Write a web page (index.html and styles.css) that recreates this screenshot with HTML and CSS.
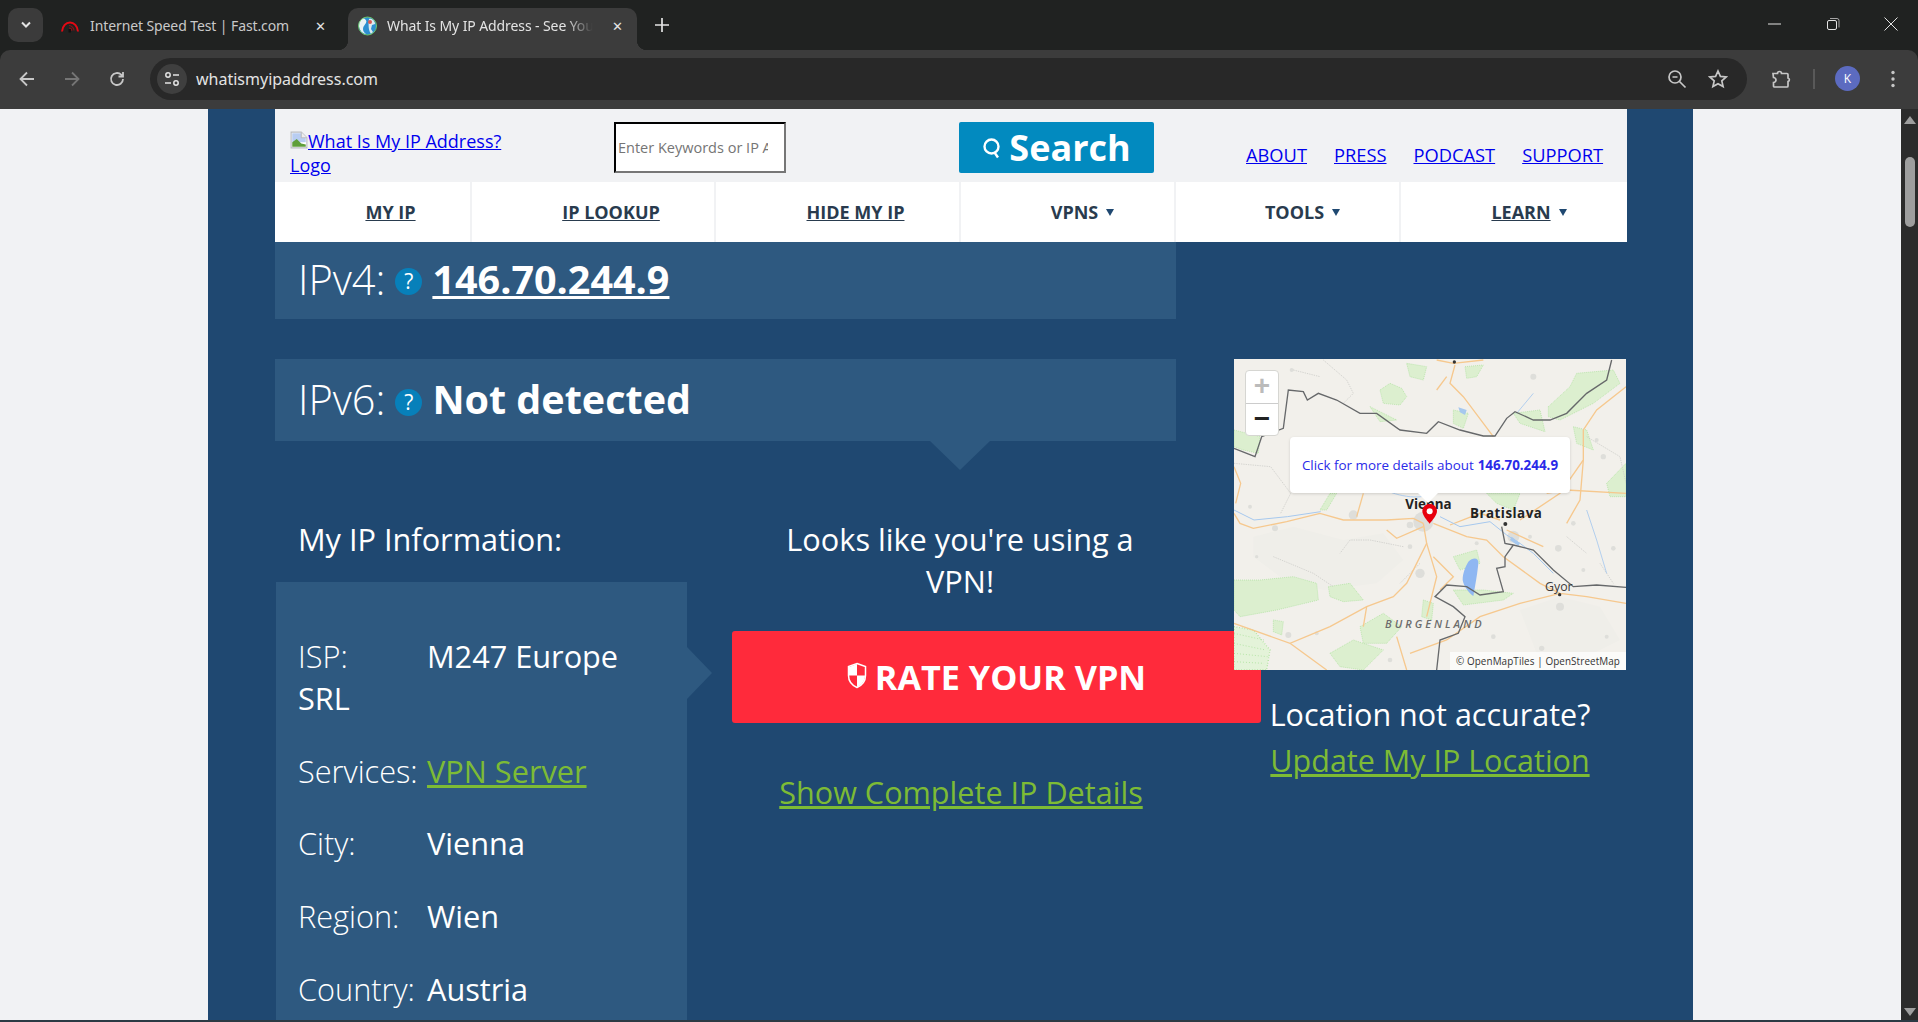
FILE: index.html
```html
<!DOCTYPE html>
<html lang="en">
<head>
<meta charset="UTF-8" />
<title>What Is My IP Address</title>
<link rel="stylesheet" href="styles.css">
</head>
<body>
<div class="chrome-tabs">
  <div class="tab-search">
    <svg width="12" height="8" viewBox="0 0 12 8"><path d="M2 1.500l4 4 4-4" fill="none" stroke="#e3e3e3" stroke-width="2"/></svg>
  </div>
  <div class="tab first">
    <svg class="favicon" width="20" height="16" viewBox="0 0 20 16"><path d="M2 13.500C2.500 8 6 4.500 10 4.500s7.500 3.500 8 9" fill="none" stroke="#e50914" stroke-width="2"/><path d="M9 7.500c2.500 0 5 2.500 5 5M9 10c1.500 0 2.800 1.300 2.800 2.800" fill="none" stroke="#8e1015" stroke-width="1.200"/><rect x="8.500" y="11" width="2.500" height="3.500" fill="#111"/></svg>
    <span class="tab-title">Internet Speed Test | Fast.com</span>
    <span class="tab-close">✕</span>
  </div>
  <div class="tab active">
    <svg class="favicon" width="19" height="20" viewBox="0 0 19 20"><circle cx="9.500" cy="10" r="9" fill="#2c8fd0"/><path d="M5 2c3 1 4 3 3 5s-3 3-3 6 2 4 3 5c-3 0-6-3-7-7s1-7 4-9z" fill="#e8f2f6"/><path d="M11 3c3-1 6 2 6 5l-3 1-1 4 2 3-2 2c-2-3-3-7-2-15z" fill="#dbeaf0"/><circle cx="12" cy="6" r="2" fill="#d65a55"/><circle cx="9.500" cy="10" r="9" fill="none" stroke="#6cc56f" stroke-width="1"/></svg>
    <span class="tab-title">What Is My IP Address - See Your Public</span>
    <span class="tab-close">✕</span>
  </div>
  <div class="new-tab">
    <svg width="14" height="14" viewBox="0 0 14 14"><path d="M7 0v14M0 7h14" stroke="#e3e3e3" stroke-width="1.700"/></svg>
  </div>
  <div class="window-btns">
    <svg width="14" height="14" viewBox="0 0 14 14"><path d="M0 7h13" stroke="#e3e3e3" stroke-width="1"/></svg>
    <svg width="14" height="14" viewBox="0 0 14 14"><rect x="1.500" y="3.500" width="9" height="9" rx="1.500" fill="none" stroke="#e3e3e3"/><path d="M4 1.500h7a2 2 0 0 1 2 2v7" fill="none" stroke="#a5a5a5"/></svg>
    <svg width="14" height="14" viewBox="0 0 14 14"><path d="M.5.5l13 13M13.500.5l-13 13" stroke="#e3e3e3" stroke-width="1"/></svg>
  </div>
</div>

<div class="toolbar">
  <svg class="nav-icon" width="18" height="18" viewBox="0 0 18 18"><path d="M16 9H3M9 2.500L2.500 9 9 15.500" fill="none" stroke="#c7c7c7" stroke-width="1.800"/></svg>
  <svg class="nav-icon" width="18" height="18" viewBox="0 0 18 18"><path d="M2 9h13M9 2.500L15.500 9 9 15.500" fill="none" stroke="#757575" stroke-width="1.800"/></svg>
  <svg class="nav-icon" width="18" height="18" viewBox="0 0 18 18"><path d="M15 9a6 6 0 1 1-1.800-4.300L15 6.500M15 2v4.500h-4.500" fill="none" stroke="#c7c7c7" stroke-width="1.800"/></svg>
  <div class="omnibox">
    <span class="site-settings">
      <svg width="16" height="16" viewBox="0 0 16 16"><g fill="none" stroke="#e3e3e3" stroke-width="1.500"><circle cx="4" cy="4" r="2.200"/><path d="M9 4h6M1 12h6"/><circle cx="12" cy="12" r="2.200"/></g></svg>
    </span>
    <span class="url">whatismyipaddress.com</span>
    <svg class="omni-icon" width="20" height="20" viewBox="0 0 20 20"><g fill="none" stroke="#c7c7c7" stroke-width="1.700"><circle cx="8" cy="8" r="6"/><path d="M5.500 8h5M12.500 12.500L18.500 18.500"/></g></svg>
    <svg class="omni-icon" width="20" height="20" viewBox="0 0 20 20"><path d="M10 2l2.400 5.400 5.800.6-4.400 3.900 1.300 5.700L10 14.700l-5.100 2.900 1.300-5.700L1.800 8l5.800-.6z" fill="none" stroke="#c7c7c7" stroke-width="1.700"/></svg>
  </div>
  <svg class="ext-icon" width="20" height="20" viewBox="0 0 20 20"><path d="M2 4.500h4.500a2 2 0 0 1 4 0H16a1 1 0 0 1 1 1v3.500a1.800 1.800 0 0 1 0 3.500V17a1 1 0 0 1-1 1H3.500a1 1 0 0 1-1-1v-3.500a2.500 2.500 0 0 0 0-5z" fill="none" stroke="#c7c7c7" stroke-width="1.700"/></svg>
  <span class="toolbar-sep"></span>
  <span class="avatar">K</span>
  <svg class="menu-dots" width="6" height="18" viewBox="0 0 6 18"><circle cx="3" cy="2.500" r="1.700" fill="#c7c7c7"/><circle cx="3" cy="9" r="1.700" fill="#c7c7c7"/><circle cx="3" cy="15.500" r="1.700" fill="#c7c7c7"/></svg>
</div>

<div class="viewport">
  <div class="page">
    <div class="wrap">
      <header class="site-head">
        <a class="logo" href="#"><svg class="broken-img" width="18" height="18" viewBox="0 0 16 16"><path d="M1 1h9l5 5v9H1z" fill="#fff" stroke="#b9bcc1"/><path d="M2 2h8v4h4v4H2z" fill="#b8cdf2"/><path d="M2 14V10l4-3 4 4 4 1v2z" fill="#5f9e3a"/><path d="M10 1v5h5" fill="#eee" stroke="#b9bcc1"/></svg>What Is My IP Address? Logo</a>
        <input class="search-input" type="text" placeholder="Enter Keywords or IP Address">
        <button class="search-btn"><svg width="20" height="24" viewBox="0 0 20 24"><circle cx="9.500" cy="10.500" r="7" fill="none" stroke="#fff" stroke-width="2.400"/><path d="M12.500 16.500l3.500 5" stroke="#fff" stroke-width="2.400"/></svg>Search</button>
        <nav class="head-links">
          <a href="#">ABOUT</a>
          <a href="#">PRESS</a>
          <a href="#">PODCAST</a>
          <a href="#">SUPPORT</a>
        </nav>
      </header>
      <nav class="main-nav">
        <div class="nav-item w1"><a href="#">MY IP</a></div>
        <div class="nav-item w2"><a href="#">IP LOOKUP</a></div>
        <div class="nav-item w3"><a href="#">HIDE MY IP</a></div>
        <div class="nav-item w4"><a class="plain" href="#">VPNS</a><span class="caret"></span></div>
        <div class="nav-item w5"><a class="plain" href="#">TOOLS</a><span class="caret"></span></div>
        <div class="nav-item w6"><a href="#">LEARN</a><span class="caret"></span></div>
      </nav>
      <div class="content">
        <div class="left">
          <div class="ip-box v4">
            <span class="ip-label">IPv4:</span><span class="help">?</span><a class="ip-value" href="#">146.70.244.9</a>
          </div>
          <div class="ip-box v6">
            <span class="ip-label">IPv6:</span><span class="help">?</span><span class="ip-value none">Not detected</span>
          </div>
          <div class="info-row">
            <div class="info-col">
              <h2 class="info-title">My IP Information:</h2>
              <div class="info-box">
                <div class="info-line"><span class="info-key">ISP:</span>M247 Europe SRL</div>
                <div class="info-line"><span class="info-key">Services:</span><a class="green" href="#">VPN Server</a></div>
                <div class="info-line"><span class="info-key">City:</span>Vienna</div>
                <div class="info-line"><span class="info-key">Region:</span>Wien</div>
                <div class="info-line"><span class="info-key">Country:</span>Austria</div>
              </div>
            </div>
            <div class="vpn-col">
              <p class="vpn-msg">Looks like you're using a VPN!</p>
              <a class="rate-btn" href="#">
                <svg width="20" height="28" viewBox="0 0 20 28"><path d="M10 1.500l8.500 3v9c0 6-4 10-8.500 12-4.500-2-8.500-6-8.500-12v-9z" fill="none" stroke="#fff" stroke-width="1.500"/><path d="M10 2v11.500H2V5zM10 13.500h8c0 5.500-3.500 9.500-8 11.500z" fill="#fff"/></svg>
                RATE YOUR VPN
              </a>
              <a class="green details" href="#">Show Complete IP Details</a>
            </div>
          </div>
        </div>
        <div class="right">
          <div class="map">
            <svg class="map-art" width="392" height="311" viewBox="42 27 1176 933">
              <rect x="42" y="27" width="1176" height="933" fill="#f2f0eb"/>
              <g class="map-base">
                <path d="M100 560l120-30 150 40 120-20 60 80-80 70-160 20-130-40-80-60zM900 780l120-40 120 30 60 100-120 60-130-20z" fill="#efeee9"/>
                <g fill="#dededa">
                  <circle cx="610" cy="515" r="30"/><circle cx="570" cy="525" r="10"/><circle cx="880" cy="560" r="18"/><circle cx="400" cy="495" r="14"/><circle cx="940" cy="80" r="9"/><circle cx="1020" cy="770" r="12"/><circle cx="600" cy="670" r="14"/><circle cx="165" cy="535" r="9"/><circle cx="1015" cy="595" r="10"/><circle cx="1180" cy="595" r="7"/><circle cx="1150" cy="320" r="8"/><circle cx="205" cy="855" r="9"/><circle cx="820" cy="860" r="7"/><circle cx="965" cy="895" r="8"/><circle cx="570" cy="590" r="7"/><circle cx="770" cy="580" r="6"/><circle cx="1090" cy="660" r="6"/><circle cx="90" cy="470" r="6"/><circle cx="215" cy="60" r="6"/><circle cx="930" cy="560" r="6"/><circle cx="1130" cy="270" r="6"/><circle cx="1060" cy="520" r="7"/><circle cx="510" cy="930" r="7"/><circle cx="290" cy="850" r="6"/><circle cx="110" cy="620" r="5"/><circle cx="1160" cy="860" r="6"/>
                </g>
                <g fill="#dcefcf" stroke="#a9e09a" stroke-width="2" stroke-dasharray="3 3">
                  <path d="M480 120l30-20 35 15 15 25-20 25-50-5z"/>
                  <path d="M560 40l60 10-10 40-40-10z"/>
                  <path d="M735 50l55-5-20 35-30 5z"/>
                  <path d="M985 170l65-60 20-40 110-10 20 40-80 60-100 50-35-10z"/>
                  <path d="M880 190l80-10 15 65-75-25z"/>
                  <path d="M450 170l80 40-50 5z"/>
                  <path d="M42 240l78 20-5 50-45-10-28-10z"/>
                  <path d="M42 690l78 0 100-10 70 20 5 50-125 30-110 20-18-20z"/>
                  <path d="M325 710l65-10 40 50-60 5-40-15z"/>
                  <path d="M420 830l70-40 55 40-45 50h-70z"/>
                  <path d="M330 910l70-40 90 30-60 60-70-10z"/>
                  <path d="M700 620l70-20 10 40-60 20z"/>
                  <path d="M700 720l90 0 90 10-30 20-120 15z"/>
                  <path d="M800 430h100l-20 50-50-20z"/>
                  <path d="M1160 400l58-60v100h-48z"/>
                  <path d="M1060 230l40 10 20 60-50-20z"/>
                  <path d="M330 430h20l-30 50h-20z"/>
                  <path d="M700 180l45 10-15 45-30-15z"/>
                  <path d="M610 750l30 10-5 50-30-10z"/>
                  <path d="M160 810l30 5-5 40-25-10z"/>
                </g>
                <path d="M42 830l58 10 50 60-10 60H42z" fill="#e4f3d9" stroke="#a0e08f" stroke-width="4" stroke-dasharray="2 6"/>
                <path d="M42 850l90 20M42 880l95 20M42 910l100 10M42 935l90 5" stroke="#a0e08f" stroke-width="3" stroke-dasharray="2 7" fill="none"/>
                <g fill="none" stroke="#c6c6c3" stroke-width="2" stroke-dasharray="4 3">
                  <path d="M310 30l70 60 20 40-30 30M42 340l110 10 60 80-30 60M1100 260l100 60 18 80M700 290l40 100M550 590l-100-20-60 0-30 40M220 60l80 20M600 640l-60 60M160 620l120 50 60 40M1140 640l40 60M1040 560l60 50"/>
                </g>
                <g fill="none" stroke="#f6c88e" stroke-width="4">
                  <path d="M42 490l18 30 40 15 100-20 100-25 70 20h130l80-5 30 15"/>
                  <path d="M610 520l10 60-30 60-30 60-40 40-80 30-110 60-120 50-168-60"/>
                  <path d="M640 520l100 40 60 10 50 50 110 80 60 30 80 10 118 20"/>
                  <path d="M705 45l-15 55 40 40 90 120"/>
                  <path d="M650 30l50 10 90-10"/>
                  <path d="M430 430l-20 70"/>
                  <path d="M500 540l30 25 80-35"/>
                  <path d="M620 580l30 100-10 40-20 80"/>
                  <path d="M1218 110l-88 70-40 60v90l-70 100-120 80"/>
                  <path d="M690 525l90-35 60 20"/>
                  <path d="M860 540l110 50"/>
                  <path d="M980 430l60-10 178 10"/>
                  <path d="M1020 730l-120 30-120 40-100 70-110 40"/>
                  <path d="M210 880l110 80"/>
                  <path d="M440 770l-10 60M530 860l30 100"/>
                  <path d="M1090 330l-10 120-40 70"/>
                  <path d="M42 350l20 50-15 60M680 80l-30 40M640 620l60 60-40 40"/>
                </g>
                <path d="M660 500l60 30 90-15 50 40 40 25 40 30 60 60M42 480l60 30 100-10 100-15" fill="none" stroke="#a6c8ee" stroke-width="3"/>
                <path d="M515 428c30 10 60 15 90 12M1100 480l30 90 30 100M940 130l-50 60" fill="none" stroke="#a6c8ee" stroke-width="2.500"/>
                <path d="M745 635c15-15 32-12 30 5 -2 25-8 60-15 98-10-6-30-30-32-48 0-20 8-40 17-55z" fill="#8fb7f2"/>
                <path d="M715 172l25 8-5 15-15-8zM875 560l25 20-5 8-25-18z" fill="#a6c8ee"/>
                <g fill="none" stroke="#66686a" stroke-width="4">
                  <path d="M42 295l63 25 20-60 65-25 15-115 45 5 12 25 33-20 55 20 70 40h50l70 50 80 10 35-35 65 25 70 18h35l35-53 25-20 55 25h50l50-20 60-60 60-40 15-60"/>
                  <path d="M845 530l10 50 25 5 60 15 60 60 60 50 70-5 88 7"/>
                  <path d="M880 585l-25 35v30l-25 5 20 70-70 10-40-25-60-5-35 35 55 30 35 30-20 50-55 20-10 90"/>
                </g>
              </g>
              <g class="map-labels">
                <text x="556" y="476" font-size="40" font-weight="700" fill="#222">Vienna</text>
                <text x="750" y="503" font-size="40" font-weight="700" letter-spacing="1.500" fill="#222">Bratislava</text>
                <text x="975" y="722" font-size="37" fill="#3a3a3a">Gyor</text>
                <text x="495" y="834" font-size="33" font-style="italic" font-weight="600" letter-spacing="9" fill="#6c6c6c">BURGENLAND</text>
              </g>
              <circle cx="703" cy="36" r="5" fill="#333"/><circle cx="856" cy="522" r="6" fill="#333"/><circle cx="1019" cy="734" r="5" fill="#333"/>
              <path d="M629 462c-13 0-22 10-22 21 0 13 14 28 22 38 8-10 22-25 22-38 0-11-9-21-22-21z" fill="#e8000d"/>
              <circle cx="629" cy="484" r="9" fill="#fff"/>
            </svg>
            <div class="zoom-ctl"><span class="zoom-in">+</span><span class="zoom-out">−</span></div>
            <a class="map-popup" href="#">Click for more details about <b>146.70.244.9</b></a>
            <div class="attrib">© OpenMapTiles | OpenStreetMap</div>
          </div>
          <p class="loc-q">Location not accurate?</p>
          <a class="green loc-link" href="#">Update My IP Location</a>
        </div>
      </div>
    </div>
  </div>
  <div class="scrollbar">
    <span class="scroll-up"></span>
    <span class="scroll-thumb"></span>
    <span class="scroll-down"></span>
  </div>
</div>
</body>
</html>
```

FILE: styles.css
```css
* {
  box-sizing: border-box;
}
html, body {
  height: 100%;
}
body {
  margin: 0;
  overflow: hidden;
  font-family: "Open Sans", sans-serif;
  background: #202221;
  color: #fff;
  display: flex;
  flex-direction: column;
}

/* browser chrome */
.chrome-tabs {
  height: 50px;
  flex: none;
  display: flex;
  align-items: flex-end;
  padding-left: 8px;
  background: #202221;
  color: #e3e3e3;
  font-size: 14px;
}
.tab-search {
  width: 35px;
  height: 34px;
  margin-bottom: 8px;
  border-radius: 10px;
  background: #3b3b3b;
  display: flex;
  align-items: center;
  justify-content: center;
}
.tab {
  width: 289px;
  height: 42px;
  display: flex;
  align-items: center;
  border-radius: 10px 10px 0 0;
  position: relative;
}
.tab.first {
  padding: 0 2px 7px 17px;
  color: #c9c9c9;
}
.tab.active {
  margin-left: 16px;
  padding: 0 10px 7px 10px;
  background: #3c3c3c;
  color: #e3e3e3;
}
.tab.active::before,
.tab.active::after {
  content: "";
  position: absolute;
  bottom: 0;
  width: 10px;
  height: 10px;
}
.tab.active::before {
  left: -10px;
  background: radial-gradient(circle at 0 0, #202221 10px, #3c3c3c 10.5px);
}
.tab.active::after {
  right: -10px;
  background: radial-gradient(circle at 100% 0, #202221 10px, #3c3c3c 10.5px);
}
.favicon {
  flex: none;
  margin-right: 10px;
}
.tab-title {
  flex: 1;
  min-width: 0;
  overflow: hidden;
  white-space: nowrap;
  font-family: "Noto Sans", sans-serif;
  font-size: 14px;
  letter-spacing: -0.1px;
}
.tab.active .tab-title {
  -webkit-mask-image: linear-gradient(to right, #000 85%, transparent 98%);
  mask-image: linear-gradient(to right, #000 85%, transparent 98%);
}
.tab-close {
  flex: none;
  width: 20px;
  margin-left: 10px;
  text-align: center;
  font-size: 13px;
  color: #e3e3e3;
}
.new-tab {
  margin: 0 0 18px 18px;
  display: flex;
}
.window-btns {
  margin-left: auto;
  margin-right: 20px;
  margin-bottom: 19px;
  display: flex;
  gap: 44px;
}

.toolbar {
  height: 59px;
  flex: none;
  display: flex;
  align-items: center;
  padding: 0 0 2px 18px;
  background: #3c3c3c;
  border-radius: 10px 10px 0 0;
}
.nav-icon {
  flex: none;
  margin-right: 27px;
}
.nav-icon:nth-of-type(3) {
  margin-right: 24px;
}
.omnibox {
  width: 1597px;
  height: 42px;
  flex: none;
  display: flex;
  align-items: center;
  padding: 0 19px 0 7px;
  border-radius: 21px;
  background: #282828;
}
.site-settings {
  width: 30px;
  height: 30px;
  border-radius: 50%;
  background: #3f3f3f;
  display: flex;
  align-items: center;
  justify-content: center;
}
.url {
  flex: 1;
  margin-left: 9px;
  font-family: "Noto Sans", sans-serif;
  font-size: 16px;
  color: #e3e3e3;
}
.omni-icon {
  margin-left: 21px;
}
.ext-icon {
  margin-left: 24px;
  flex: none;
}
.toolbar-sep {
  width: 2px;
  height: 20px;
  margin-left: 22px;
  background: #595959;
}
.avatar {
  width: 25px;
  height: 25px;
  margin-left: 20px;
  border-radius: 50%;
  background: #5c6bc0;
  color: #fff;
  font-size: 12px;
  line-height: 25px;
  text-align: center;
}
.menu-dots {
  margin-left: 30px;
}

/* page */
.viewport {
  flex: 1;
  min-height: 0;
  display: flex;
  border-bottom: 2px solid #2b3a44;
}
.page {
  flex: 1;
  overflow: hidden;
  background: #f1f2f4;
}
.scrollbar {
  width: 17px;
  flex: none;
  background: #2b2b2b;
  position: relative;
}
.scroll-up {
  position: absolute;
  left: 3px;
  top: 7px;
  border-left: 6px solid transparent;
  border-right: 6px solid transparent;
  border-bottom: 8px solid #9e9e9e;
}
.scroll-down {
  position: absolute;
  left: 3px;
  bottom: 4px;
  border-left: 6px solid transparent;
  border-right: 6px solid transparent;
  border-top: 8px solid #9e9e9e;
}
.scroll-thumb {
  position: absolute;
  left: 4px;
  top: 48px;
  width: 10px;
  height: 70px;
  border-radius: 5px;
  background: #9e9e9e;
}
.wrap {
  width: 1485px;
  height: 100%;
  margin: 0 auto;
  padding: 0 66px 0 67px;
  background: #1f4871;
}
.site-head {
  height: 73px;
  padding: 13px 0 0 15px;
  display: flex;
  align-items: flex-start;
  background: #f1f2f4;
}
.logo {
  width: 230px;
  flex: none;
  margin-top: 7px;
  font-size: 18px;
  line-height: 24px;
  color: #00e;
}
.broken-img {
  vertical-align: -1px;
}
.search-input {
  width: 172px;
  height: 51px;
  flex: none;
  margin-left: 94px;
  padding: 1px 16px 1px 2px;
  border: 2px inset #767676;
  border-color: #1d1d1d #767676 #767676 #1d1d1d;
  border-radius: 0;
  background: #fff;
  font-family: "Open Sans", sans-serif;
  font-size: 14.500px;
}
.search-btn {
  width: 195px;
  height: 51px;
  flex: none;
  margin-left: 173px;
  border: none;
  border-radius: 2px;
  display: flex;
  align-items: center;
  justify-content: center;
  gap: 7px;
  background: #028abf;
  color: #fff;
  font-family: "Open Sans", sans-serif;
  font-size: 36px;
  font-weight: 700;
}
.head-links {
  margin-left: 92px;
  padding-top: 21px;
  display: flex;
  gap: 27px;
  font-size: 18.300px;
  line-height: 24px;
}
.head-links a {
  color: #00e;
  font-weight: 500;
}
.main-nav {
  height: 60px;
  display: flex;
  background: #fff;
  font-size: 18px;
  font-weight: 700;
}
.nav-item {
  flex: none;
  padding-left: 36px;
  display: flex;
  align-items: center;
  justify-content: center;
  gap: 8px;
  border-right: 2px solid #f1f2f4;
}
.nav-item:last-child {
  border-right: none;
}
.nav-item a {
  color: #293b4e;
}
.nav-item a.plain {
  text-decoration: none;
}
.w1 { width: 197px; }
.w2 { width: 244px; }
.w3 { width: 245px; }
.w4 { width: 215px; padding-left: 30px; }
.w5 { width: 225px; padding-left: 30px; }
.w6 { width: 226px; padding-left: 30px; }
.caret {
  border-left: 4px solid transparent;
  border-right: 4px solid transparent;
  border-top: 7px solid #1f4871;
}
.content {
  display: flex;
  align-items: flex-start;
}
.left {
  width: 901px;
  flex: none;
}
.ip-box {
  display: flex;
  align-items: center;
  padding-left: 24px;
  background: #2e5980;
}
.ip-box.v4 {
  height: 77px;
  padding-bottom: 4px;
}
.ip-box.v6 {
  height: 82px;
  margin-top: 40px;
  padding-bottom: 2px;
  position: relative;
}
.ip-box.v6::after {
  content: "";
  position: absolute;
  left: 655px;
  top: 100%;
  border-left: 30px solid transparent;
  border-right: 30px solid transparent;
  border-top: 29px solid #2e5980;
}
.ip-label {
  margin-left: -1px;
  font-size: 41.500px;
  font-weight: 300;
}
.help {
  width: 27px;
  height: 27px;
  margin: 6px 10px 0 10px;
  border-radius: 50%;
  background: #0780ba;
  font-size: 21px;
  line-height: 27px;
  text-align: center;
}
.ip-value {
  color: #fff;
  font-size: 39.500px;
  font-weight: 700;
}
.info-row {
  display: flex;
}
.info-col {
  width: 412px;
  flex: none;
}
.info-title {
  margin: 77px 0 0;
  padding-left: 23px;
  font-size: 30.700px;
  font-weight: 400;
  line-height: 42px;
}
.info-box {
  margin: 22px 0 0 1px;
  padding: 53px 20px 0 22px;
  height: 600px;
  background: #2e5980;
  position: relative;
  font-size: 30.700px;
  line-height: 42px;
}
.info-box::after {
  content: "";
  position: absolute;
  left: 100%;
  top: 65px;
  border-top: 26px solid transparent;
  border-bottom: 26px solid transparent;
  border-left: 25px solid #2e5980;
}
.info-line {
  margin-bottom: 30.700px;
}
.info-key {
  display: inline-block;
  width: 129px;
  font-weight: 300;
}
a.green {
  color: #7dbb35;
}
.vpn-col {
  width: 488px;
  margin-left: 45px;
  flex: none;
  text-align: center;
}
.vpn-msg {
  width: 456px;
  margin: 77px 0 0;
  padding: 0 50px;
  font-size: 30.700px;
  line-height: 42px;
}
.rate-btn {
  width: 529px;
  height: 92px;
  margin-top: 29px;
  padding-bottom: 2px;
  display: flex;
  align-items: center;
  justify-content: center;
  gap: 8px;
  border-radius: 3px;
  background: #ff2a3b;
  color: #fff;
  font-size: 34.200px;
  font-weight: 700;
  text-decoration: none;
}
.details {
  display: block;
  width: 458px;
  margin-top: 48px;
  font-size: 30.600px;
  line-height: 42px;
}
.right {
  width: 392px;
  margin: 117px 0 0 58px;
  flex: none;
  text-align: center;
  position: relative;
}
.map {
  width: 392px;
  height: 311px;
  position: relative;
  overflow: hidden;
  text-align: left;
}
.map-art {
  display: block;
}
.map-base {
  filter: blur(0.4px);
}
.map-labels text {
  font-family: "Open Sans", sans-serif;
}
.zoom-ctl {
  position: absolute;
  left: 11px;
  top: 11px;
  width: 34px;
  height: 66px;
  display: flex;
  flex-direction: column;
  border: 1px solid #d6d6d2;
  border-radius: 4px;
  background: #fff;
  font-family: "Liberation Sans", sans-serif;
  font-weight: 700;
  font-size: 28px;
  text-align: center;
}
.zoom-in {
  height: 33px;
  line-height: 30px;
  border-bottom: 1px solid #ccc;
  color: #bbb;
}
.zoom-out {
  flex: 1;
  line-height: 30px;
  color: #222;
}
.map-popup {
  position: absolute;
  left: 56px;
  top: 78px;
  width: 280px;
  height: 56px;
  display: flex;
  align-items: center;
  justify-content: center;
  gap: 4px;
  border-radius: 4px;
  background: #fff;
  box-shadow: 0 1px 3px rgba(0,0,0,0.15);
  color: #2a2ae8;
  font-size: 13.400px;
  text-decoration: none;
  white-space: nowrap;
}
.map-popup::after {
  content: "";
  position: absolute;
  left: 128px;
  top: 100%;
  border-left: 10px solid transparent;
  border-right: 10px solid transparent;
  border-top: 10px solid #fff;
}
.attrib {
  position: absolute;
  right: 0;
  bottom: 0;
  padding: 0 6px;
  height: 18px;
  line-height: 18px;
  background: rgba(255,255,255,0.7);
  color: #333;
  font-size: 9.900px;
  letter-spacing: 0.1px;
}
.loc-q {
  margin: 23px 0 0;
  font-size: 30.500px;
  line-height: 42px;
}
.loc-link {
  display: block;
  margin-top: 4px;
  font-size: 30.500px;
  line-height: 42px;
}
```
